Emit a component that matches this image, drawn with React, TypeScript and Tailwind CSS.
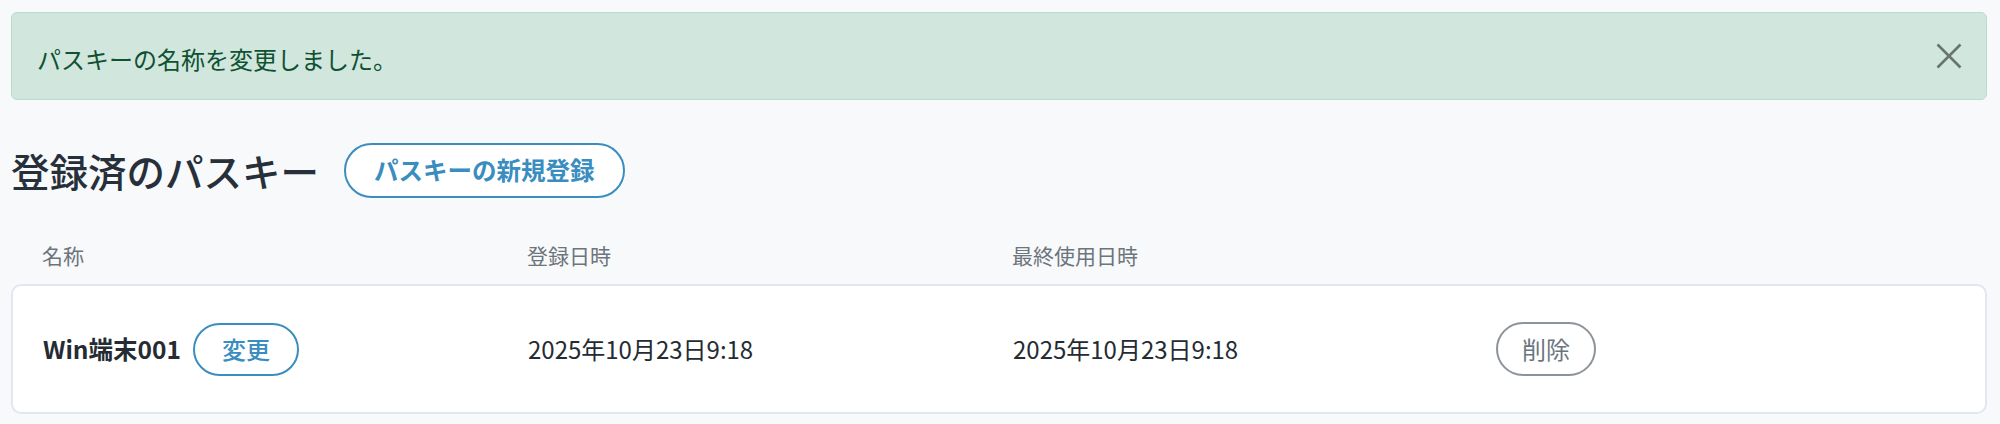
export default function App() {
  return (
    <div className="min-h-screen bg-[#f8f9fa] px-[11px] pt-[12px] pr-[13px] font-['Noto_Sans_CJK_JP','Noto_Sans',sans-serif]">
      {/* 完了メッセージ */}
      <div className="flex h-[88px] items-center justify-between rounded-[6px] border border-[#badbcc] bg-[#d1e7dd] pl-[25px] pr-[24px] text-[#0f5132]">
        <p className="pt-[5px] text-[24px] leading-none">パスキーの名称を変更しました。</p>
        <button type="button" aria-label="閉じる" className="flex h-[26px] w-[26px] items-center justify-center">
          <svg width="26" height="26" viewBox="0 0 26 26" fill="none">
            <path d="M1.5 1.5L24.5 24.5M24.5 1.5L1.5 24.5" stroke="#6a746f" strokeWidth="2.6" />
          </svg>
        </button>
      </div>

      {/* 見出し */}
      <div className="mt-[43px] flex h-[55px] items-center gap-[25px]">
        <h1 className="text-[38.5px] font-medium leading-none text-[#27303a]">登録済のパスキー</h1>
        <button
          type="button"
          className="h-[55px] rounded-full border-2 border-[#3a8dbf] bg-white px-[28px] text-[24.5px] font-bold leading-none text-[#3a8dbf]"
        >
          パスキーの新規登録
        </button>
      </div>

      {/* 一覧ヘッダー */}
      <div className="mt-[30px] grid h-[56px] grid-cols-[485px_485px_483px_1fr] items-center pl-[31px] text-[21px] text-[#6c757d]">
        <span>名称</span>
        <span>登録日時</span>
        <span>最終使用日時</span>
        <span />
      </div>

      {/* 一覧行 */}
      <div className="grid h-[130px] grid-cols-[485px_485px_483px_1fr] items-center rounded-[10px] border-2 border-[#e0e7f0] bg-white pl-[30px] text-[24px] text-[#252b33]">
        <div className="flex items-center gap-[12px]">
          <span className="text-[24.5px] font-bold">Win端末001</span>
          <button
            type="button"
            className="h-[53px] rounded-full border-2 border-[#3a8dbf] bg-white px-[27px] font-medium leading-none text-[#3a8dbf]"
          >
            変更
          </button>
        </div>
        <span>2025年10月23日9:18</span>
        <span>2025年10月23日9:18</span>
        <div>
          <button
            type="button"
            className="h-[54px] rounded-full border-2 border-[#8d939a] bg-white px-[24px] leading-none text-[#6c757d]"
          >
            削除
          </button>
        </div>
      </div>
    </div>
  );
}
